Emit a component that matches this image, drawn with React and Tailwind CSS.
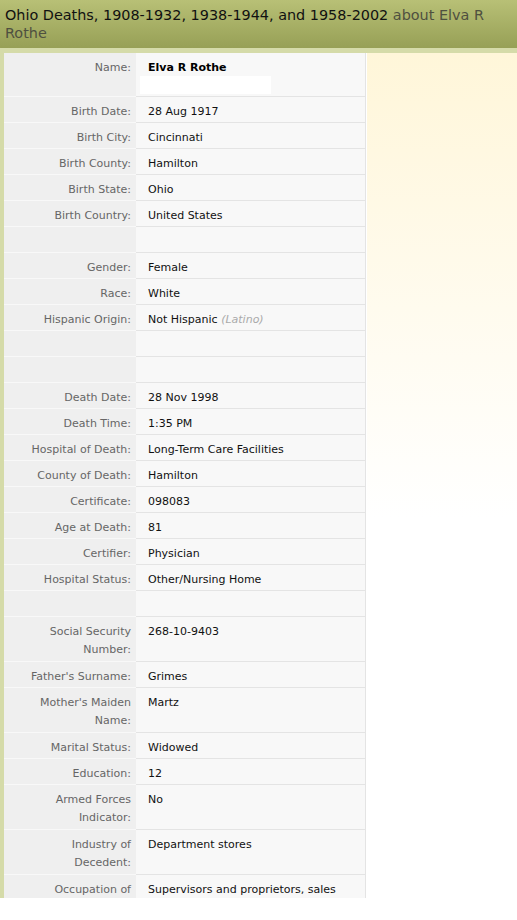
const rows = [
  { label: ["Name:"], name: true },
  { label: ["Birth Date:"], value: "28 Aug 1917" },
  { label: ["Birth City:"], value: "Cincinnati" },
  { label: ["Birth County:"], value: "Hamilton" },
  { label: ["Birth State:"], value: "Ohio" },
  { label: ["Birth Country:"], value: "United States" },
  { label: [""], value: "" },
  { label: ["Gender:"], value: "Female" },
  { label: ["Race:"], value: "White" },
  { label: ["Hispanic Origin:"], value: "Not Hispanic", note: "(Latino)" },
  { label: [""], value: "" },
  { label: [""], value: "" },
  { label: ["Death Date:"], value: "28 Nov 1998" },
  { label: ["Death Time:"], value: "1:35 PM" },
  { label: ["Hospital of Death:"], value: "Long-Term Care Facilities" },
  { label: ["County of Death:"], value: "Hamilton" },
  { label: ["Certificate:"], value: "098083" },
  { label: ["Age at Death:"], value: "81" },
  { label: ["Certifier:"], value: "Physician" },
  { label: ["Hospital Status:"], value: "Other/Nursing Home" },
  { label: [""], value: "" },
  { label: ["Social Security", "Number:"], value: "268-10-9403" },
  { label: ["Father's Surname:"], value: "Grimes" },
  { label: ["Mother's Maiden", "Name:"], value: "Martz" },
  { label: ["Marital Status:"], value: "Widowed" },
  { label: ["Education:"], value: "12" },
  { label: ["Armed Forces", "Indicator:"], value: "No" },
  { label: ["Industry of", "Decedent:"], value: "Department stores" },
  { label: ["Occupation of", "Decedent:"], value: "Supervisors and proprietors, sales occupations" },
];

const Row = ({ row }) => {
  const tall = row.label.length > 1;
  const h = row.name ? "h-[44px]" : tall ? "h-[45px]" : "h-[26px]";
  return (
    <div className={`flex shrink-0 ${h}`}>
      <div className="w-[132px] shrink-0 bg-[#efefef] border-b border-[#f8f8f8] pt-[6px] pr-[5px] text-right text-[#666] whitespace-nowrap">
        {row.label.map((l, i) => (
          <div key={i}>{l}</div>
        ))}
      </div>
      <div className="w-[230px] shrink-0 bg-[#f8f8f8] border-b border-r border-[#e4e4e4] pt-[6px] pl-[12px] text-[#111]">
        {row.name ? (
          <>
            <div className="font-bold text-black">Elva R Rothe</div>
            <div className="mt-[-1px] ml-[-8px] w-[131px] h-[18px] bg-white" />
          </>
        ) : (
          <div>
            {row.value}
            {row.note && <span className="italic text-[#aaa]"> {row.note}</span>}
          </div>
        )}
      </div>
    </div>
  );
};

export default function App() {
  return (
    <div className="w-[517px] h-[920px] bg-white overflow-hidden font-['DejaVu_Sans',sans-serif]">
      <div className="h-[48px] bg-linear-to-b from-[#b8c076] to-[#97a056] pl-[5px] pt-[6px] text-[14.4px] leading-[18px] text-[#111]">
        Ohio Deaths, 1908-1932, 1938-1944, and 1958-2002{" "}
        <span className="text-[#4f5040]">about Elva R Rothe</span>
      </div>
      <div className="h-[5px] bg-[#d5dba9]" />
      <div className="flex h-[845px] overflow-hidden">
        <div className="w-[4px] shrink-0 bg-[#d5dba9]" />
        <div className="flex flex-col w-[363px] shrink-0 text-[11px] leading-[18px]">
          {rows.map((r, i) => (
            <Row key={i} row={r} />
          ))}
        </div>
        <div className="flex-1 bg-linear-to-b from-[#fff6d9] to-white to-55%" />
      </div>
    </div>
  );
}
